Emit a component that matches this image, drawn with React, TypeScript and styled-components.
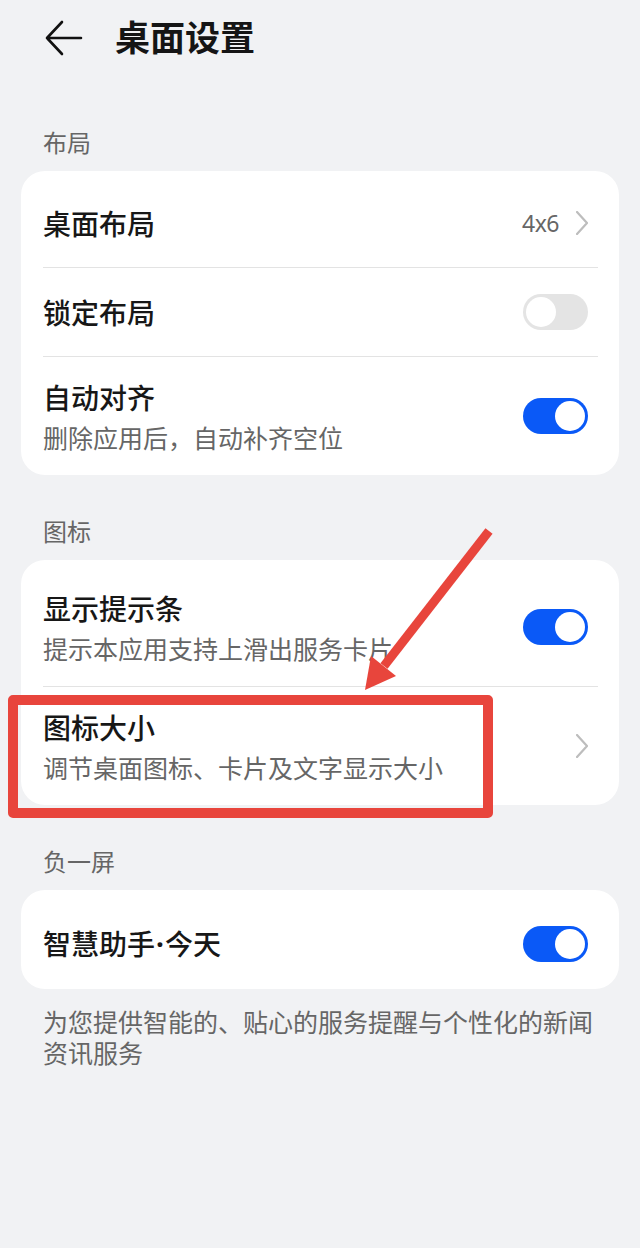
import React from 'react';
import styled, { createGlobalStyle } from 'styled-components';

const GlobalStyle = createGlobalStyle`
  html, body {
    margin: 0;
    padding: 0;
    background: #f1f2f4;
  }
  body {
    font-family: "Noto Sans", "Noto Sans CJK SC", sans-serif;
    -webkit-font-smoothing: antialiased;
  }
`;

const cjk = `"Noto Sans CJK SC", "Noto Sans", sans-serif`;

type RowItem = {
  title: string;
  sub?: string;
  value?: string;
  kind: 'chevron' | 'on' | 'off';
};

const sections: { label: string; rows: RowItem[] }[] = [
  {
    label: '布局',
    rows: [
      { title: '桌面布局', value: '4x6', kind: 'chevron' },
      { title: '锁定布局', kind: 'off' },
      { title: '自动对齐', sub: '删除应用后，自动补齐空位', kind: 'on' },
    ],
  },
  {
    label: '图标',
    rows: [
      { title: '显示提示条', sub: '提示本应用支持上滑出服务卡片', kind: 'on' },
      { title: '图标大小', sub: '调节桌面图标、卡片及文字显示大小', kind: 'chevron' },
    ],
  },
  {
    label: '负一屏',
    rows: [{ title: '智慧助手·今天', kind: 'on' }],
  },
];

function BackIcon() {
  return (
    <svg width="38" height="36" viewBox="0 0 38 36" fill="none">
      <path d="M17 2 L2 18 L17 34 M2 18 H36" stroke="#111" strokeWidth="2.6" strokeLinecap="round" strokeLinejoin="round" />
    </svg>
  );
}

function Chevron() {
  return (
    <svg width="12" height="24" viewBox="0 0 12 24" fill="none">
      <path d="M1 1 L11 12 L1 23" stroke="#bdbdbd" strokeWidth="2.2" strokeLinecap="round" strokeLinejoin="round" />
    </svg>
  );
}

// the middle dot should stay narrow (latin), not full-width cjk
function TitleText({ text }: { text: string }) {
  const parts = text.split('·');
  if (parts.length < 2) return <>{text}</>;
  return (
    <>
      {parts[0]}
      <Dot>·</Dot>
      {parts[1]}
    </>
  );
}

const App = () => {
  return (
    <>
      <GlobalStyle />
      <Page>
        <Header>
          <BackBtn>
            <BackIcon />
          </BackBtn>
          <Title>桌面设置</Title>
        </Header>
        {sections.map((s) => (
          <Section key={s.label}>
            <SectionLabel>{s.label}</SectionLabel>
            <Card>
              {s.rows.map((r, i) => (
                <React.Fragment key={r.title}>
                  {i > 0 && <Divider />}
                  <Row $double={!!r.sub} $single={s.rows.length === 1}>
                    <TextCol>
                      <RowTitle>
                        <TitleText text={r.title} />
                      </RowTitle>
                      {r.sub && <RowSub>{r.sub}</RowSub>}
                    </TextCol>
                    <Trail>
                      {r.value && <Value>{r.value}</Value>}
                      {r.kind === 'chevron' ? (
                        <Chevron />
                      ) : (
                        <Toggle $on={r.kind === 'on'}>
                          <Knob $on={r.kind === 'on'} />
                        </Toggle>
                      )}
                    </Trail>
                  </Row>
                </React.Fragment>
              ))}
            </Card>
          </Section>
        ))}
        <Footnote>为您提供智能的、贴心的服务提醒与个性化的新闻资讯服务</Footnote>

        {/* annotation drawn over the screenshot */}
        <MarkBox />
        <MarkArrow width="640" height="1248" viewBox="0 0 640 1248">
          <line x1="489" y1="531" x2="384" y2="666" stroke="#e8453c" strokeWidth="9" />
          <polygon points="365,690 371,656 396,676" fill="#e8453c" />
        </MarkArrow>
      </Page>
    </>
  );
};

const Page = styled.div`
  position: relative;
  width: 640px;
  min-height: 1248px;
  padding: 0 21px;
  box-sizing: border-box;
  background: #f1f2f4;
`;

const Header = styled.div`
  height: 76px;
  display: flex;
  align-items: center;
  padding: 0 0 10px 24px;
`;

const BackBtn = styled.div`
  display: flex;
  width: 38px;
  height: 36px;
  margin-right: 32px;
`;

const Title = styled.div`
  font-family: ${cjk};
  font-size: 35px;
  font-weight: 700;
  color: #151515;
  line-height: 40px;
  margin-top: -4px;
`;

const Section = styled.div`
  display: flex;
  flex-direction: column;
  margin-top: 39px;
`;

const SectionLabel = styled.div`
  font-family: ${cjk};
  font-size: 24px;
  line-height: 34px;
  color: #666;
  padding-left: 22px;
  margin-bottom: 12px;
`;

const Card = styled.div`
  background: #fff;
  border-radius: 24px;
  padding-top: 8px;
  display: flex;
  flex-direction: column;
`;

const Row = styled.div<{ $double: boolean; $single: boolean }>`
  display: flex;
  align-items: center;
  justify-content: space-between;
  min-height: ${({ $double, $single }) => ($double ? '118px' : $single ? '91px' : '88px')};
  padding: 0 31px 0 22px;
`;

const Divider = styled.div`
  height: 1px;
  background: #e3e3e3;
  margin: 0 21px 0 22px;
`;

const TextCol = styled.div`
  display: flex;
  flex-direction: column;
`;

const RowTitle = styled.div`
  font-family: ${cjk};
  font-size: 28px;
  font-weight: 500;
  line-height: 36px;
  color: #171717;
`;

const Dot = styled.span`
  font-family: "Noto Sans", sans-serif;
  font-weight: 700;
  margin: 0 1px;
`;

const RowSub = styled.div`
  font-family: ${cjk};
  font-size: 25px;
  line-height: 34px;
  color: #666;
  margin-top: 5px;
`;

const Trail = styled.div`
  display: flex;
  align-items: center;
  gap: 17px;
`;

const Value = styled.span`
  font-family: "Noto Sans", sans-serif;
  font-size: 23px;
  color: #666;
  letter-spacing: -0.5px;
`;

const Toggle = styled.div<{ $on: boolean }>`
  position: relative;
  width: 65px;
  height: 36px;
  border-radius: 18px;
  background: ${({ $on }) => ($on ? '#0a59f7' : '#e4e4e4')};
`;

const Knob = styled.div<{ $on: boolean }>`
  position: absolute;
  top: 3px;
  left: ${({ $on }) => ($on ? '32px' : '3px')};
  width: 30px;
  height: 30px;
  border-radius: 50%;
  background: #fff;
`;

const Footnote = styled.div`
  font-family: ${cjk};
  font-size: 25px;
  line-height: 31px;
  color: #666;
  padding: 0 20px 0 22px;
  margin-top: 17px;
`;

const MarkBox = styled.div`
  position: absolute;
  left: 8px;
  top: 695px;
  width: 485px;
  height: 123px;
  box-sizing: border-box;
  border: 10px solid #e8453c;
  border-radius: 5px;
  pointer-events: none;
`;

const MarkArrow = styled.svg`
  position: absolute;
  left: 0;
  top: 0;
  pointer-events: none;
`;

export default App;
